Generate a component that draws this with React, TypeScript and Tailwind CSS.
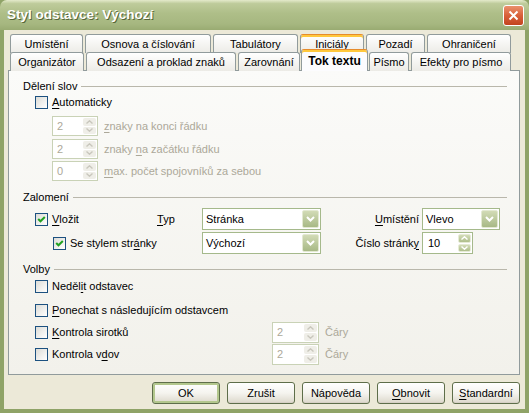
import React from "react";

function U({ children }: { children: React.ReactNode }) {
  return <span className="underline underline-offset-[2px]">{children}</span>;
}

function Check({ checked }: { checked?: boolean }) {
  return (
    <div className="w-[13px] h-[13px] border border-[#1C5180] bg-linear-to-br from-[#DCDCD7] to-white flex items-center justify-center shrink-0">
      {checked && (
        <svg width="11" height="11" viewBox="0 0 11 11">
          <path d="M2.2 5 L4.5 7.3 L8.8 3" stroke="#21A121" strokeWidth="2" fill="none" />
        </svg>
      )}
    </div>
  );
}

function Chevron({ up, color }: { up?: boolean; color: string }) {
  return (
    <svg width="7" height="4" viewBox="0 0 7 4">
      <path d={up ? "M0.5 3.5 L3.5 0.8 L6.5 3.5" : "M0.5 0.5 L3.5 3.2 L6.5 0.5"} stroke={color} strokeWidth="1.4" fill="none" />
    </svg>
  );
}

function SpinButtons({ disabled }: { disabled?: boolean }) {
  const half = disabled
    ? "flex-1 flex items-center justify-center bg-[#EFEEE8] rounded-[2px]"
    : "flex-1 flex items-center justify-center bg-linear-to-b from-[#D3DCB8] to-[#AFBF8C] border border-[#E6EBD6] rounded-[2px]";
  const c = disabled ? "#C9C7BD" : "#FFFFFF";
  return (
    <div className="w-[15px] flex flex-col gap-[1px] p-[1px] shrink-0">
      <div className={half}>
        <Chevron up color={c} />
      </div>
      <div className={half}>
        <Chevron color={c} />
      </div>
    </div>
  );
}

function Combo({ value, wide }: { value: string; wide?: boolean }) {
  return (
    <div className={`${wide ? "w-[119px]" : "w-[78px]"} h-[22px] border border-[#A5B98B] bg-white flex items-center shrink-0`}>
      <span className="flex-1 pl-[3px] text-black">{value}</span>
      <div className="w-[17px] h-[18px] mr-[1px] bg-linear-to-b from-[#D2DBB6] to-[#A8B986] border border-[#E3E9D2] rounded-[2px] flex items-center justify-center">
        <svg width="9" height="6" viewBox="0 0 9 6">
          <path d="M1 1 L4.5 4.5 L8 1" stroke="#FFFFFF" strokeWidth="2" fill="none" />
        </svg>
      </div>
    </div>
  );
}

function Header({ text, mt }: { text: string; mt: string }) {
  return (
    <div className={`flex items-center h-[14px] gap-[4px] ${mt}`}>
      <span>{text}</span>
      <div className="flex-1 h-px bg-[#B9B7AB]" />
    </div>
  );
}

function Tab({ w, label, hot }: { w: string; label: string; hot?: boolean }) {
  return (
    <div
      className={`${w} h-[19px] shrink-0 border border-b-0 border-[#919B9C] rounded-t-[3px] bg-linear-to-b from-white to-[#ECEBE6] flex items-center justify-center ${
        hot ? "border-t-[#E68B2C] shadow-[inset_0_2px_0_#FFC83C]" : ""
      }`}
    >
      {label}
    </div>
  );
}

function Button({ children, def }: { children: React.ReactNode; def?: boolean }) {
  return (
    <div
      className={`w-[68px] h-[22px] border border-[#5E6E4A] rounded-[3px] bg-linear-to-b from-white via-[#F5F4EF] to-[#DCD8CB] flex items-center justify-center ${
        def ? "shadow-[inset_0_0_0_2px_#B3C78D]" : "shadow-[inset_0_-1px_0_#D6D0C5]"
      }`}
    >
      {children}
    </div>
  );
}

export default function App() {
  return (
    <div className="w-[529px] h-[413px] flex flex-col font-['Liberation_Sans',Arial,sans-serif] text-[11px] text-black bg-[#8FA367]">
      {/* Title bar */}
      <div className="h-[30px] shrink-0 rounded-t-[7px] bg-[linear-gradient(180deg,#E4EACB_0%,#BECB9B_12%,#AEBE88_45%,#A6B780_80%,#99AB72_100%)] flex items-center pl-[7px] pr-[5px]">
        <span className="flex-1 text-white font-bold text-[13.5px] [text-shadow:1px_1px_0_#56663A]">Styl odstavce: Výchozí</span>
        <div className="w-[21px] h-[21px] rounded-[3px] border border-white bg-linear-to-b from-[#E9906C] via-[#D9603A] to-[#C2441E] flex items-center justify-center">
          <svg width="11" height="11" viewBox="0 0 11 11">
            <path d="M1.5 1.5 L9.5 9.5 M9.5 1.5 L1.5 9.5" stroke="#FFFFFF" strokeWidth="2" />
          </svg>
        </div>
      </div>

      {/* Body */}
      <div className="flex-1 mx-[4px] mb-[4px] bg-[#ECE9D8] flex flex-col">
        <div className="pl-[4px] pt-[4px] flex flex-col">
          {/* tab row 1 */}
          <div className="flex gap-[2px] pl-[2px] h-[18px]">
            <Tab w="w-[73px]" label="Umístění" />
            <Tab w="w-[126px]" label="Osnova a číslování" />
            <Tab w="w-[85px]" label="Tabulátory" />
            <Tab w="w-[64px]" label="Iniciály" hot />
            <Tab w="w-[59px]" label="Pozadí" />
            <Tab w="w-[84px]" label="Ohraničení" />
          </div>
          {/* tab row 2 */}
          <div className="flex gap-[2px] pl-[2px] h-[18px] items-end relative z-10">
            <div className="self-start">
              <Tab w="w-[74px]" label="Organizátor" />
            </div>
            <div className="self-start">
              <Tab w="w-[150px]" label="Odsazení a proklad znaků" />
            </div>
            <div className="self-start">
              <Tab w="w-[62px]" label="Zarovnání" />
            </div>
            <div className="w-[67px] h-[22px] -mx-[1px] -mb-[1px] shrink-0 border border-b-0 border-[#919B9C] border-t-[#E68B2C] rounded-t-[3px] bg-[#FCFCFE] shadow-[inset_0_2px_0_#FFC83C] flex items-center justify-center font-bold text-[12px]">
              Tok textu
            </div>
            <div className="self-start">
              <Tab w="w-[40px]" label="Písmo" />
            </div>
            <div className="self-start">
              <Tab w="w-[100px]" label="Efekty pro písmo" />
            </div>
          </div>

          {/* pane */}
          <div className="w-[512px] h-[305px] border border-[#919B9C] bg-linear-to-b from-[#FBFBF9] to-[#F2F1EB] flex flex-col pl-[14px] pr-[12px]">
            <Header text="Dělení slov" mt="mt-[8px]" />
            <div className="flex items-center h-[14px] mt-[2px] ml-[12px] gap-[4px]">
              <Check />
              <span>
                <U>A</U>utomaticky
              </span>
            </div>
            {[
              { v: "2", l: <><U>z</U>naky na konci řádku</>, mt: "mt-[7px]" },
              { v: "2", l: <>znaky <U>n</U>a začátku řádku</>, mt: "mt-[3px]" },
              { v: "0", l: <><U>m</U>ax. počet spojovníků za sebou</>, mt: "mt-[2px]" },
            ].map((r, i) => (
              <div key={i} className={`flex items-center h-[20px] ml-[29px] gap-[6px] ${r.mt}`}>
                <div className="w-[46px] h-[20px] border border-[#C9D2B6] bg-white flex">
                  <span className="flex-1 pl-[4px] flex items-center text-[#ACA899]">{r.v}</span>
                  <SpinButtons disabled />
                </div>
                <span className="text-[#ACA899]">{r.l}</span>
              </div>
            ))}

            <Header text="Zalomení" mt="mt-[9px]" />
            <div className="flex items-center h-[22px] mt-[4px] ml-[12px]">
              <div className="w-[122px] flex items-center gap-[4px]">
                <Check checked />
                <span>
                  <U>V</U>ložit
                </span>
              </div>
              <span className="w-[45px]">
                <U>T</U>yp
              </span>
              <Combo value="Stránka" wide />
              <span className="w-[101px] text-right pr-[3px]">
                <U>U</U>místění
              </span>
              <Combo value="Vlevo" />
            </div>
            <div className="flex items-center h-[22px] mt-[2px] ml-[30px]">
              <div className="w-[149px] flex items-center gap-[4px]">
                <Check checked />
                <span>
                  Se stylem str<U>á</U>nky
                </span>
              </div>
              <Combo value="Výchozí" wide />
              <span className="w-[101px] text-right pr-[3px]">
                Číslo stránk<U>y</U>
              </span>
              <div className="w-[51px] h-[22px] border border-[#A5B98B] bg-white flex">
                <span className="flex-1 pl-[5px] flex items-center">10</span>
                <SpinButtons />
              </div>
            </div>

            <Header text="Volby" mt="mt-[8px]" />
            <div className="flex items-center h-[14px] mt-[3px] ml-[12px] gap-[4px]">
              <Check />
              <span>
                Neděl<U>i</U>t odstavec
              </span>
            </div>
            <div className="flex items-center h-[14px] mt-[10px] ml-[12px] gap-[4px]">
              <Check />
              <span>
                <U>P</U>onechat s následujícím odstavcem
              </span>
            </div>
            {[
              { l: <><U>K</U>ontrola sirotků</>, mt: "mt-[5px]" },
              { l: <>Kontrola v<U>d</U>ov</>, mt: "mt-[1px]" },
            ].map((r, i) => (
              <div key={i} className={`flex items-center h-[21px] ml-[12px] ${r.mt}`}>
                <div className="w-[237px] flex items-center gap-[4px]">
                  <Check />
                  <span>{r.l}</span>
                </div>
                <div className="w-[47px] h-[21px] border border-[#C9D2B6] bg-white flex">
                  <span className="flex-1 pl-[4px] flex items-center text-[#ACA899]">2</span>
                  <SpinButtons disabled />
                </div>
                <span className="ml-[6px] text-[#ACA899]">Čáry</span>
              </div>
            ))}
          </div>
        </div>

        {/* buttons */}
        <div className="flex justify-end gap-[7px] pr-[5px] mt-[7px]">
          <Button def>OK</Button>
          <Button>Zrušit</Button>
          <Button>Nápověda</Button>
          <Button>
            <U>O</U>bnovit
          </Button>
          <Button>
            <U>S</U>tandardní
          </Button>
        </div>
      </div>
    </div>
  );
}
